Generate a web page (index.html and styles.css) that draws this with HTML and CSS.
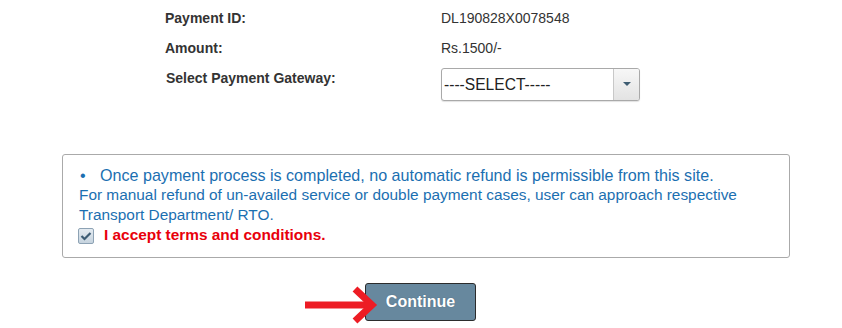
FILE: index.html
```html
<!DOCTYPE html>
<html>
<head>
<meta charset="utf-8">
<link rel="stylesheet" href="styles.css">
</head>
<body>
<div class="details">
  <div class="row"><div class="label">Payment ID:</div><div class="value">DL190828X0078548</div></div>
  <div class="row"><div class="label">Amount:</div><div class="value">Rs.1500/-</div></div>
  <div class="row row-select">
    <div class="label label-gw">Select Payment Gateway:</div>
    <div class="select">
      <span class="select-text">----SELECT-----</span>
      <span class="select-btn"><span class="tri"></span></span>
    </div>
  </div>
</div>

<div class="notice">
  <div class="line line-first"><span class="bullet">•</span>Once payment process is completed, no automatic refund is permissible from this site.</div>
  <div class="line">For manual refund of un-availed service or double payment cases, user can approach respective</div>
  <div class="line">Transport Department/ RTO.</div>
  <div class="line accept">
    <span class="checkbox">
      <svg width="12" height="10" viewBox="0 0 12 10"><polyline points="1.5,5 4.5,8 10.5,2" fill="none" stroke="#3d5c74" stroke-width="2.2"/></svg>
    </span>
    <span class="accept-text">I accept terms and conditions.</span>
  </div>
</div>

<div class="actions">
  <button class="continue">Continue</button>
  <svg class="arrow" width="80" height="48" viewBox="0 0 80 48">
    <line x1="5" y1="25" x2="71" y2="25" stroke="#ed1c24" stroke-width="7"/>
    <polyline points="55,9 72,25 55,41" fill="none" stroke="#ed1c24" stroke-width="7" stroke-linejoin="miter" stroke-miterlimit="10"/>
  </svg>
</div>
</body>
</html>
```

FILE: styles.css
```css
html, body {
  margin: 0;
  padding: 0;
  background: #fff;
}
body {
  font-family: "Liberation Sans", Arial, sans-serif;
  color: #333;
  width: 842px;
  height: 328px;
  overflow: hidden;
}
.details {
  padding-top: 3px;
  padding-left: 165px;
}
.row {
  display: flex;
  height: 30px;
  line-height: 30px;
  font-size: 14px;
}
.row-select {
  height: 38px;
  align-items: flex-start;
}
.label {
  width: 276px;
  font-weight: bold;
  color: #333;
}
.label-gw {
  padding-left: 1px;
  width: 275px;
}
.value {
  color: #333;
}
.select {
  margin-top: 5px;
  width: 197px;
  height: 31px;
  border: 1px solid #a9a9a9;
  border-radius: 3px;
  display: flex;
  box-shadow: 0 1px 1px rgba(0,0,0,0.12);
  overflow: hidden;
  background: #fff;
}
.select-text {
  flex: 1;
  font-size: 15.6px;
  line-height: 31px;
  padding-left: 2px;
  color: #222;
}
.select-btn {
  width: 25px;
  border-left: 1px solid #c8c8c8;
  background: linear-gradient(#f7f7f7, #e3e3e3);
  display: flex;
  align-items: center;
  justify-content: center;
}
.tri {
  width: 0;
  height: 0;
  border-left: 4px solid transparent;
  border-right: 4px solid transparent;
  border-top: 4px solid #3e5d72;
  margin-top: -1px;
}
.notice {
  margin-top: 53px;
  margin-left: 62px;
  width: 726px;
  height: 102px;
  border: 1px solid #aaa;
  border-radius: 3px;
  font-size: 15.4px;
  color: #1b6fb1;
}
.line-first {
  margin-top: 10px;
  font-size: 16.1px;
}
.line {
  line-height: 20px;
  padding-left: 16px;
  white-space: nowrap;
}
.bullet {
  display: inline-block;
  width: 21px;
  padding-left: 1px;
  box-sizing: border-box;
}
.accept {
  display: flex;
  align-items: center;
  height: 20px;
}
.checkbox {
  width: 14px;
  height: 14px;
  border: 1px solid #8da2b4;
  border-radius: 2px;
  background: linear-gradient(#e4ebf1, #c6d3de);
  display: flex;
  align-items: center;
  justify-content: center;
  margin-left: -1px;
  margin-top: 1px;
}
.accept-text {
  margin-left: 10px;
  font-weight: bold;
  color: #e8000b;
}
.actions {
  position: relative;
  margin-top: 25px;
  padding-left: 365px;
}
.continue {
  width: 111px;
  height: 38px;
  background: #67889e;
  border: 1px solid #2c2c2c;
  border-radius: 3px;
  color: #fff;
  font-family: "Liberation Sans", Arial, sans-serif;
  font-size: 16px;
  font-weight: bold;
  padding: 0;
  text-shadow: 0 0 1px rgba(30,50,70,0.5);
}
.arrow {
  position: absolute;
  left: 300px;
  top: -3px;
}
```
